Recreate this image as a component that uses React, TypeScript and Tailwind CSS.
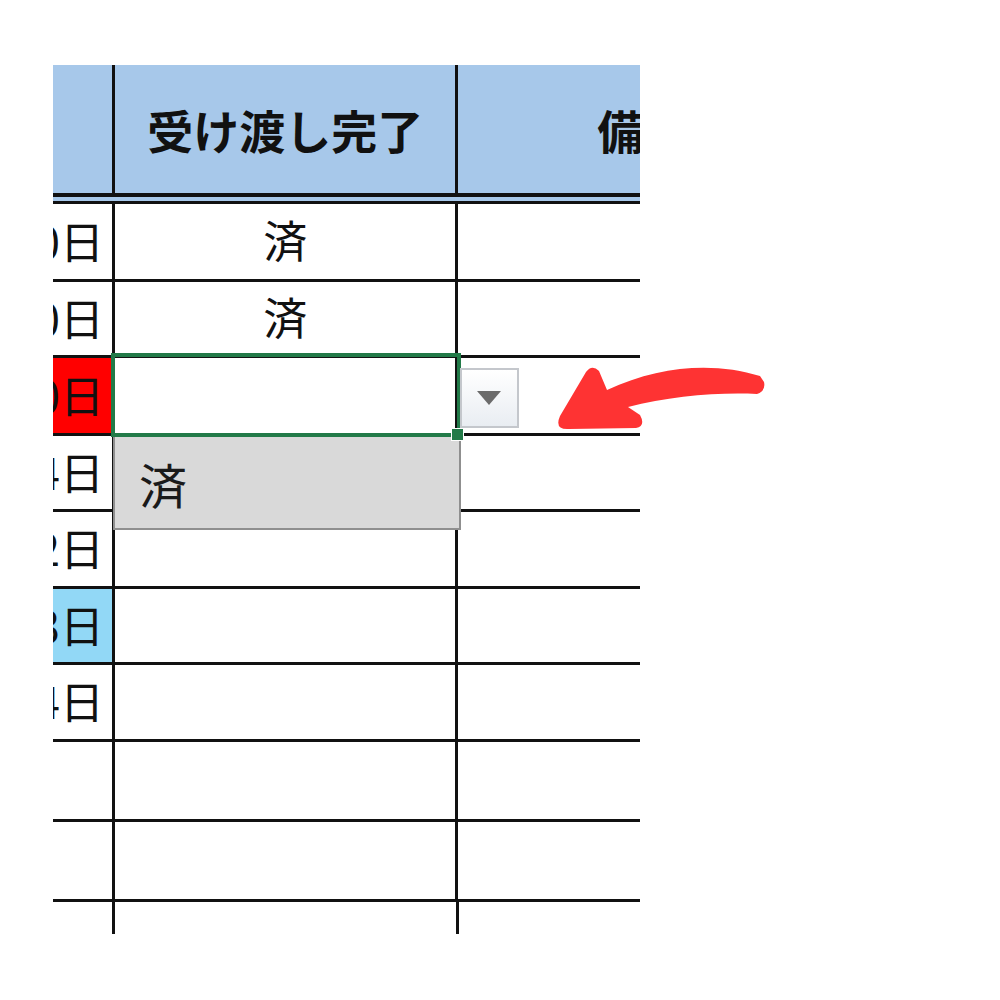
import React from "react";

type Row = {
  left: string;
  mid?: string;
  h: string;
  leftBg?: string;
  selected?: boolean;
};

const ROWS: Row[] = [
  { left: "30日", mid: "済", h: "h-[75px]" },
  { left: "30日", mid: "済", h: "h-[73px]" },
  { left: "30日", h: "h-[75px]", leftBg: "bg-[#ff0000]", selected: true },
  { left: "14日", h: "h-[73px]" },
  { left: "12日", h: "h-[74px]" },
  { left: "13日", h: "h-[73px]", leftBg: "bg-[#92d8f6]" },
  { left: "14日", h: "h-[74px]" },
  { left: "", h: "h-[77px]" },
  { left: "", h: "h-[77px]" },
];

const font = { fontFamily: '"Noto Sans CJK JP", "Noto Sans", sans-serif' };

function Arrow() {
  return (
    <svg className="absolute left-0 top-0 pointer-events-none" width="1000" height="1000" viewBox="0 0 1000 1000">
      <path
        fill="#fe3333"
        d="M760 376 C715 362 660 365 607 390 L599 371 Q592 364 586 372 L560 416 Q554 430 569 429 L636 428 Q646 426 640 415 L628 407 C670 396 720 392 757 394 Q766 391 764 382 Z"
      />
    </svg>
  );
}

function Dropdown() {
  return (
    <>
      {/* selected cell frame */}
      <div className="absolute left-[-4px] top-[-5px] right-[-6px] bottom-[-4px] border-[4px] border-[#227a48] z-10" />
      <div className="absolute right-[-9px] bottom-[-8px] w-[13px] h-[13px] bg-[#227a48] border border-white z-20" />
      {/* arrow button */}
      <div className="absolute left-[345px] top-[10px] w-[59px] h-[60px] border-2 border-[#c4c7cc] bg-gradient-to-b from-white to-[#e9edf2] flex items-center justify-center z-10">
        <svg width="26" height="16" viewBox="0 0 26 16">
          <path d="M1 1 H25 L13 15 Z" fill="#6b6b6b" />
        </svg>
      </div>
      {/* list */}
      <div className="absolute left-[-2px] top-[79px] w-[348px] h-[93px] bg-[#d9d9d9] border-2 border-t-0 border-[#8f8f8f] z-10 flex items-center pl-[24px]">
        <span className="text-[48px] leading-none text-[#1a1a1a]">済</span>
      </div>
    </>
  );
}

export default function App() {
  return (
    <div className="relative w-[1000px] h-[1000px] bg-white overflow-hidden" style={font}>
      <div className="pt-[65px] pl-[53px]">
        <div className="w-[587px] overflow-hidden text-[#111]">
          <div className="w-[775px]">
            {/* header */}
            <div className="flex h-[128px] bg-[#a7c8ea]">
              <div className="w-[62px] border-r-[3px] border-[#111]" />
              <div className="w-[344px] border-r-[3px] border-[#111] flex items-center justify-center font-bold text-[46px] leading-none">
                受け渡し完了
              </div>
              <div className="w-[370px] flex items-center justify-center font-bold text-[46px] leading-none">
                備考
              </div>
            </div>
            <div className="h-[4px] bg-[#111]" />
            <div className="h-[4px] bg-[#a7c8ea]" />
            <div className="h-[3px] bg-[#111]" />

            {/* body */}
            {ROWS.map((r, i) => (
              <div key={i} className={`flex ${r.h} box-content border-b-[3px] border-[#111]`}>
                <div
                  className={`w-[62px] border-r-[3px] border-[#111] overflow-hidden whitespace-nowrap flex items-center justify-end pr-[8px] pb-[4px] text-[44px] leading-none ${r.leftBg ?? ""}`}
                >
                  {r.left}
                </div>
                <div className="relative w-[344px] border-r-[3px] border-[#111] flex items-center justify-center pb-[6px] text-[44px] leading-none">
                  {r.mid}
                  {r.selected && <Dropdown />}
                </div>
                <div className="w-[370px]" />
              </div>
            ))}
            <div className="flex h-[32px]">
              <div className="w-[62px] border-r-[3px] border-[#111]" />
              <div className="w-[344px] border-r-[3px] border-[#111]" />
            </div>
          </div>
        </div>
      </div>
      <Arrow />
    </div>
  );
}
